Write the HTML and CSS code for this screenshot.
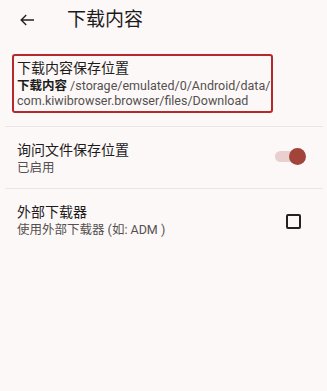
FILE: index.html
```html
<!DOCTYPE html>
<html lang="zh">
<head>
<meta charset="utf-8">
<link rel="stylesheet" href="styles.css">
</head>
<body>
<header class="topbar">
  <svg class="back" width="14" height="12" viewBox="0 0 14 12"><path d="M14 6H1.2M6.2 1L1.2 6l5 5" fill="none" stroke="#222" stroke-width="1.4"/></svg>
  <h1 class="title">下载内容</h1>
</header>
<main class="list">
  <section class="item item-boxed">
    <div class="item-title">下载内容保存位置</div>
    <div class="item-path"><b class="path-label">下载内容</b> /storage/emulated/0/Android/data/<br>com.kiwibrowser.browser/files/Download</div>
  </section>
  <div class="sep sep-first"></div>
  <section class="item">
    <div class="item-text">
      <div class="item-title">询问文件保存位置</div>
      <div class="item-sub">已启用</div>
    </div>
    <div class="switch"><span class="thumb"></span></div>
  </section>
  <div class="sep"></div>
  <section class="item">
    <div class="item-text">
      <div class="item-title">外部下载器</div>
      <div class="item-sub">使用外部下载器 (如: ADM )</div>
    </div>
    <div class="checkbox"></div>
  </section>
</main>
</body>
</html>
```
FILE: styles.css
```css
html, body {
  margin: 0;
  padding: 0;
  background: #fcf8f8;
}
body {
  font-family: Roboto, "Noto Sans CJK SC", sans-serif;
  color: #1d1b1b;
  width: 327px;
  height: 391px;
  overflow: hidden;
}
.topbar {
  height: 40px;
  display: flex;
  align-items: center;
  padding-left: 20px;
}
.back {
  display: block;
  flex: none;
}
.title {
  margin: 0 0 0 33px;
  font-size: 19px;
  font-weight: 400;
  line-height: 24px;
  color: #1d1b1b;
}
.list {
  display: flex;
  flex-direction: column;
}
.item-boxed {
  margin: 14px 54px 0 12px;
  border: 2.5px solid #b5292d;
  border-radius: 3px;
  padding: 3px 0 3px 3px;
}
.item-title {
  font-size: 14px;
  line-height: 18px;
  color: #1d1b1b;
}
.item-path {
  font-size: 12.5px;
  line-height: 15px;
  color: #55504f;
  margin-top: 1px;
}
.path-label {
  font-weight: 700;
  color: #1d1b1b;
}
.sep {
  height: 1px;
  background: #ebe5e5;
  margin: 0 4px 0 5px;
}
.sep-first {
  margin-top: 13px;
}
.item:not(.item-boxed) {
  display: flex;
  align-items: center;
  justify-content: space-between;
  padding: 14px 23px 11px 17px;
}
.item-sub {
  font-size: 12.5px;
  line-height: 18px;
  color: #55504f;
}
.switch {
  position: relative;
  width: 25px;
  height: 11px;
  border-radius: 6px;
  background: #e9cfcd;
  margin-top: -6px;
  margin-right: 4px;
}
.thumb {
  position: absolute;
  right: -6px;
  top: -3px;
  width: 17px;
  height: 17px;
  border-radius: 50%;
  background: #a3443a;
}
.checkbox {
  width: 11px;
  height: 11px;
  border: 2px solid #222;
  border-radius: 2px;
  margin-right: 3px;
}
```
